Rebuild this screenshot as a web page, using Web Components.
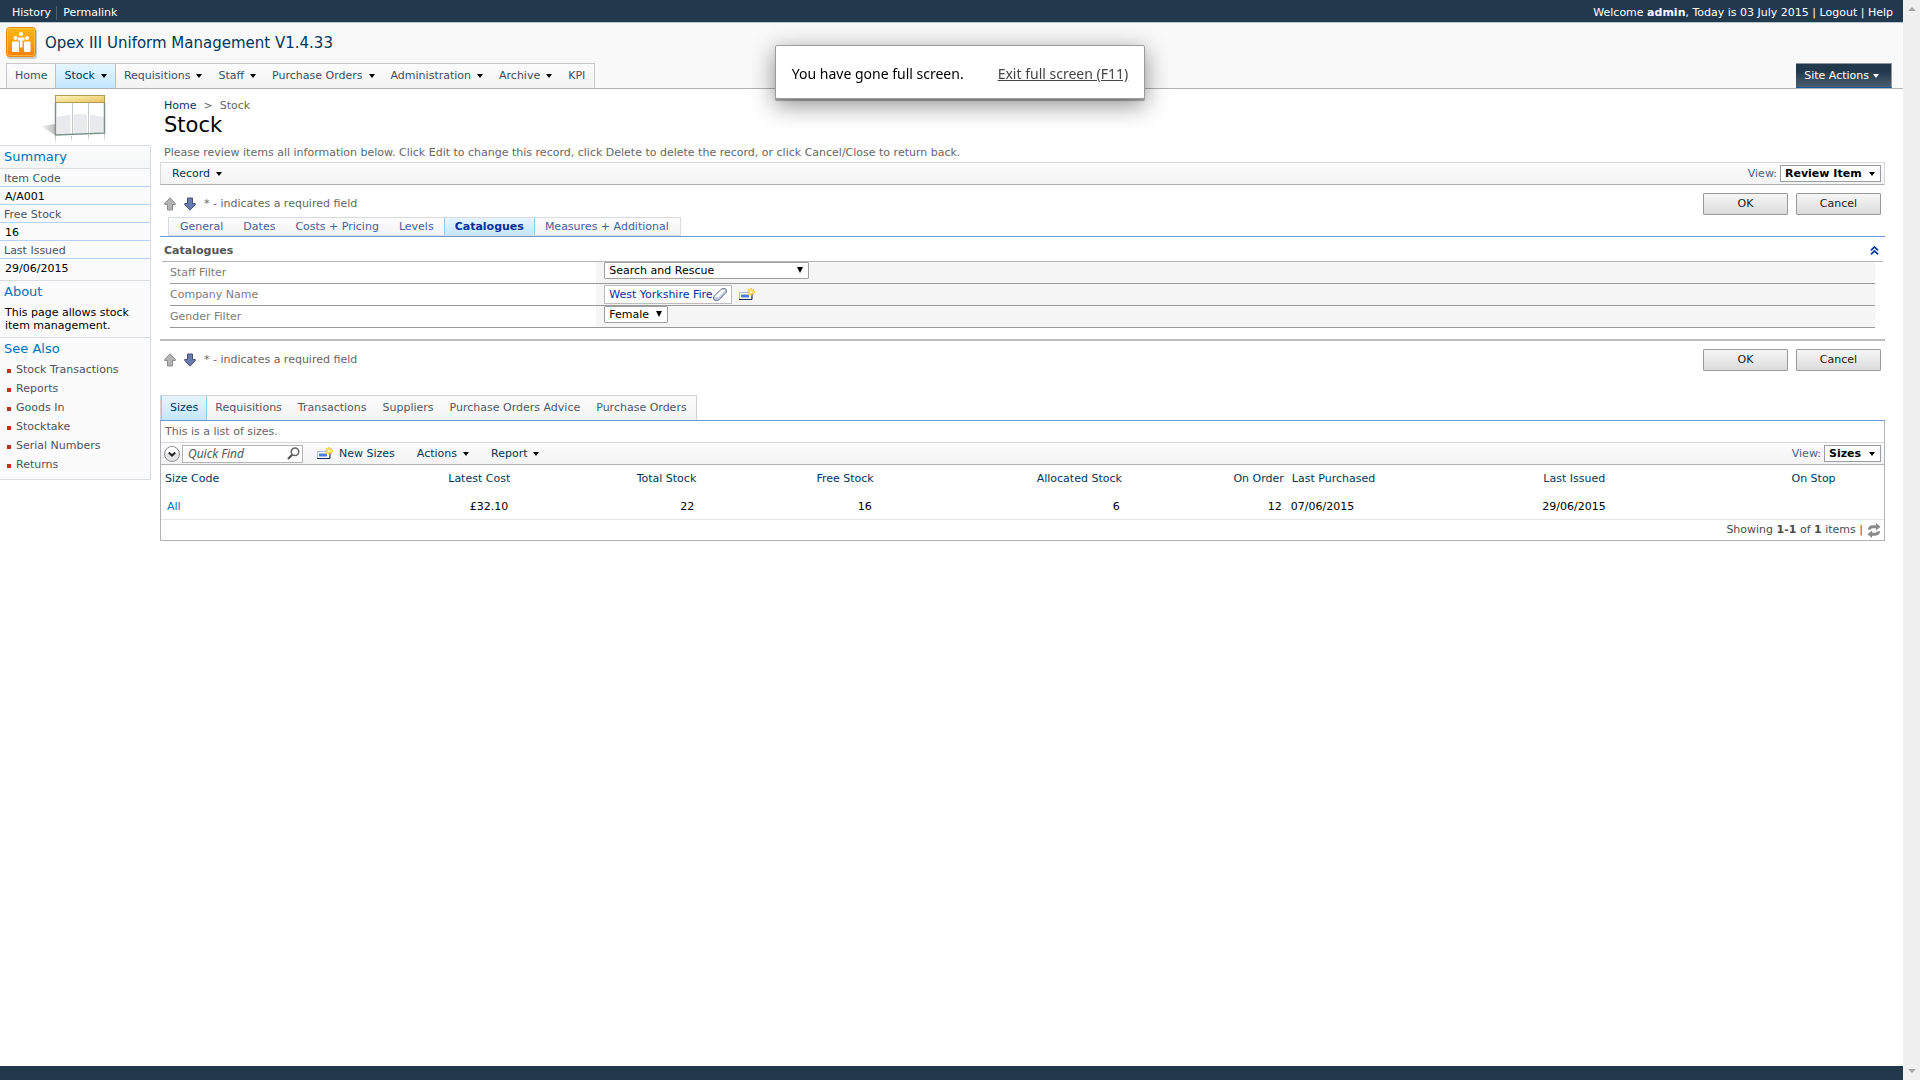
<!DOCTYPE html>
<html lang="en">
<head>
<meta charset="utf-8">
<title>Opex III Uniform Management</title>
<style>
  html, body {
    margin: 0;
    block-size: 100%;
  }

  body {
    background: #fff;
    color: #000;
    font: 11px/14px "DejaVu Sans", Verdana, sans-serif;
  }
</style>
</head>
<body>
<ox-app>
  <ox-topbar slot="top"></ox-topbar>
  <ox-header slot="top">Opex III Uniform Management V1.4.33</ox-header>
  <ox-sidebar slot="side"></ox-sidebar>

  <ox-page-title></ox-page-title>
  <ox-record-bar></ox-record-bar>
  <ox-form-actions></ox-form-actions>
  <ox-form-tabs></ox-form-tabs>
  <ox-catalogues></ox-catalogues>
  <ox-form-actions></ox-form-actions>
  <ox-child-tabs></ox-child-tabs>
  <ox-size-list></ox-size-list>
</ox-app>
<ox-toast>You have gone full screen.</ox-toast>

<script>
const icons = {
  logo: `
    <svg width="32" height="32" viewBox="0 0 32 32" aria-hidden="true">
      <defs>
        <linearGradient id="lg" x1="0" y1="0" x2="0" y2="1">
          <stop offset="0" stop-color="#fbb616"/>
          <stop offset=".5" stop-color="#fda011"/>
          <stop offset="1" stop-color="#f87d0c"/>
        </linearGradient>
      </defs>
      <rect x="1" y="2" width="30" height="30" rx="3" fill="#000" opacity=".18"/>
      <rect x=".5" y=".5" width="29" height="29" rx="3" fill="url(#lg)" stroke="#e8890f"/>
      <rect x="1.5" y="1.5" width="27" height="27" rx="2" fill="none" stroke="#ffd25e" opacity=".6"/>
      <g fill="#fff">
        <circle cx="15" cy="7" r="2"/>
        <circle cx="9.5" cy="11" r="2"/>
        <circle cx="21" cy="11" r="2"/>
        <path d="M12 10.5h6.500v3h-2v7h-2.500v-7H12z"/>
        <rect x="6" y="14.5" width="7" height="10.5" rx="1"/>
        <rect x="18" y="14.5" width="6.5" height="10.5" rx="1"/>
      </g>
    </svg>`,
  list: `
    <svg width="68" height="50" viewBox="0 0 68 50" aria-hidden="true">
      <defs>
        <linearGradient id="hd" x1="0" y1="0" x2="1" y2="1">
          <stop offset="0" stop-color="#fdf6c4"/>
          <stop offset="1" stop-color="#e9c25a"/>
        </linearGradient>
        <linearGradient id="sh" x1="0" y1="0" x2="1" y2="0">
          <stop offset="0" stop-color="#fff"/>
          <stop offset="1" stop-color="#bbb"/>
        </linearGradient>
        <linearGradient id="rf" x1="0" y1="0" x2="0" y2="1">
          <stop offset="0" stop-color="#bbb"/>
          <stop offset="1" stop-color="#fff"/>
        </linearGradient>
      </defs>
      <path d="M0 31l15-2v11z" fill="url(#sh)"/>
      <rect x="15" y="41" width="1" height="8" fill="url(#rf)"/>
      <rect x="31" y="41" width="1" height="6" fill="url(#rf)"/>
      <rect x="48" y="40" width="1" height="6" fill="url(#rf)"/>
      <rect x="64" y="39" width="1" height="8" fill="url(#rf)"/>
      <path d="M15.5 .5h49V38L15.500 40z" fill="#fff"/>
      <path d="M17 22q24-6 47 0v15L17 39z" fill="#e9eaed"/>
      <path d="M32 8v31M48.500 8v30" stroke="#fff" stroke-width="3"/>
      <path d="M32.500 8v31M48.500 8v30" stroke="#c4cbc7"/>
      <path d="M15.500 7v33L64.500 38V7" fill="none" stroke="#7c9488" stroke-width="1.5"/>
      <rect x="15.5" y=".5" width="49" height="7" fill="url(#hd)" stroke="#b29c5c"/>
    </svg>`,
  up: `
    <svg width="12" height="14" viewBox="0 0 12 14" aria-hidden="true">
      <path d="M6 .8l5.300 5.700v1H8.500v5.500h-5V7.500H.7v-1z" fill="#b4b4b4" stroke="#8b8b8b"/>
    </svg>`,
  down: `
    <svg width="12" height="14" viewBox="0 0 12 14" aria-hidden="true">
      <path d="M6 13.200L.7 7.500v-1h2.800V1h5v5.500h2.800v1z" fill="#6a7bb0" stroke="#45507c"/>
    </svg>`,
  item: `
    <svg width="16" height="13" viewBox="0 0 16 13" aria-hidden="true">
      <rect x=".5" y="4.5" width="12" height="7" fill="#fff" stroke="#a9bbe3"/>
      <path d="M0 11.500h13V6" fill="none" stroke="#15285c"/>
      <rect x="2" y="6.5" width="8" height="3" fill="#4d7de0"/>
      <g stroke="#eec42c" stroke-width="1.3">
        <path d="M12 0v8M8 4h8M9.200 1.200l5.600 5.600M14.800 1.200L9.200 6.800"/>
      </g>
      <circle cx="12" cy="4" r="1.8" fill="#fff6a8"/>
    </svg>`,
  eraser: `
    <svg width="14" height="13" viewBox="0 0 14 13" aria-hidden="true">
      <path d="M8 1.500Q9 .6 10.200.6h1.600Q13.400.8 13.300 2.500v1.700L6.500 11.500Q5.500 12.500 3.500 12.300H2Q.5 12 .6 10V8.700z" fill="#c6d0e0" stroke="#5c6b86"/>
      <path d="M1.500 8.800L8.500 1.700h4L5.500 9z" fill="#fff"/>
    </svg>`,
  collapse: `
    <svg width="9" height="9" viewBox="0 0 9 9" aria-hidden="true">
      <path d="M1 4.300L4.500 1 8 4.300M1 8.300L4.500 5 8 8.300" fill="none" stroke="#003399" stroke-width="1.7"/>
    </svg>`,
  expand: `
    <svg width="16" height="16" viewBox="0 0 16 16" aria-hidden="true">
      <circle cx="8" cy="8" r="7.5" fill="#e4e4e4" stroke="#8d8d8d"/>
      <path d="M2 7a6 6 0 0 1 12 0z" fill="#fff"/>
      <path d="M4.800 6.500L8 9.700l3.200-3.200" fill="none" stroke="#222" stroke-width="2"/>
    </svg>`,
  search: `
    <svg width="13" height="13" viewBox="0 0 13 13" aria-hidden="true">
      <circle cx="8" cy="4.8" r="3.8" fill="none" stroke="#666" stroke-width="1.5"/>
      <path d="M5.200 7.800L1 12" stroke="#555" stroke-width="2.2"/>
    </svg>`,
  refresh: `
    <svg width="14" height="15" viewBox="0 0 14 15" fill="#8a8a8a" aria-hidden="true">
      <path d="M1 7Q1 2.500 6 2.300h3V0l4.500 3.800L9 7.500V5.200H6.500Q4 5.200 3.700 6.500z"/>
      <path d="M13 8q0 4.500-5 4.700H5V15L.5 11.200 5 7.500v2.300h2.500q2.500 0 2.800-1.300z"/>
    </svg>`,
};

class OxElement extends HTMLElement {
  constructor() {
    super();

    this.attachShadow({ mode: 'open' });
  }

  get styles() {
    return '';
  }

  get template() {
    return '<slot></slot>';
  }

  connectedCallback() {
    this.shadowRoot.innerHTML = `
      <style>
        *, :host {
          box-sizing: border-box;
        }

        :host {
          display: block;
        }

        a {
          color: inherit;
          text-decoration: none;
        }

        button, input, select {
          font: inherit;
          color: inherit;
          margin: 0;
        }

        ul {
          list-style: none;
          margin: 0;
          padding: 0;
        }

        svg {
          display: block;
          flex: none;
        }

        .icon-btn {
          display: block;
          border: 0;
          padding: 0;
          background: none;
          cursor: pointer;
        }

        .caret {
          display: inline-block;
          flex: none;
          border: 3px solid transparent;
          border-block-start: 4px solid currentColor;
          border-block-end: 0;
        }

        ${this.styles}
      </style>
      ${this.template}
    `;
  }
}

customElements.define('ox-app', class extends OxElement {
  get styles() {
    return `
      :host {
        display: flex;
        min-block-size: 100vh;
      }

      .page {
        flex: 1;
        min-inline-size: 0;
        display: flex;
        flex-direction: column;
      }

      .columns {
        flex: 1;
        display: flex;
        align-items: flex-start;
        gap: 9px;
        padding-inline-end: 18px;
      }

      aside {
        flex: none;
        inline-size: 151px;
      }

      main {
        flex: 1;
        min-inline-size: 0;
      }

      footer {
        block-size: 14px;
        background: #22384d;
      }

      .scrollbar {
        flex: none;
        inline-size: 17px;
        padding: 7px 5px;
        background: #f0f0f0;
        color: #a3a3a3;
        display: flex;
        flex-direction: column;
        justify-content: space-between;
        align-items: center;
      }

      .scrollbar .caret {
        border-inline-width: 4px;
      }

      .scrollbar .caret:first-child {
        transform: rotate(180deg);
      }
    `;
  }

  get template() {
    return `
      <div class="page">
        <slot name="top"></slot>
        <div class="columns">
          <aside><slot name="side"></slot></aside>
          <main><slot></slot></main>
        </div>
        <footer></footer>
      </div>
      <div class="scrollbar" aria-hidden="true">
        <span class="caret"></span>
        <span class="caret"></span>
      </div>
    `;
  }
});

customElements.define('ox-topbar', class extends OxElement {
  get styles() {
    return `
      :host {
        display: flex;
        justify-content: space-between;
        align-items: center;
        block-size: 23px;
        padding: 3px 10px 0 12px;
        background: #22384d;
        border-block-end: 1px solid #bcc7d1;
        color: #fff;
      }

      nav {
        display: flex;
        gap: 5px;
      }

      nav a + a {
        border-inline-start: 1px solid #50606f;
        padding-inline-start: 6px;
      }
    `;
  }

  get template() {
    return `
      <nav><a href="#history">History</a><a href="#permalink">Permalink</a></nav>
      <div>Welcome <b>admin</b>, Today is 03 July 2015 | <a href="#logout">Logout</a> | <a href="#help">Help</a></div>
    `;
  }
});

customElements.define('ox-header', class extends OxElement {
  #items = [
    ['Home'], ['Stock', true], ['Requisitions', true], ['Staff', true],
    ['Purchase Orders', true], ['Administration', true], ['Archive', true], ['KPI'],
  ];

  get styles() {
    return `
      :host {
        background: #f9f9f9;
        border-block-end: 1px solid #b0b2b5;
        padding: 4px 11px 0 6px;
        color: #003759;
      }

      .brand {
        display: flex;
        align-items: center;
        gap: 7px;
        block-size: 32px;
        margin-block-end: 4px;
        font-size: 15px;
        line-height: 20px;
      }

      .row {
        display: flex;
        justify-content: space-between;
      }

      ul {
        display: flex;
        padding-inline-end: 1px;
        border: 1px solid #c8c8c8;
        border-block-end: 0;
        background: linear-gradient(#fcfcfc, #f3f3f3);
        color: #3b4f65;
      }

      li a {
        display: flex;
        align-items: center;
        gap: 6px;
        block-size: 24px;
        padding-inline: 8px;
      }

      .caret {
        color: #000;
      }

      .active {
        background: linear-gradient(#e6f5ff, #c3e7ff);
        border-inline: 1px solid #91cdf2;
        color: #003759;
      }

      .site {
        display: flex;
        align-items: center;
        gap: 4px;
        block-size: 25px;
        padding: 0 12px 0 8px;
        border: 1px solid #8d98a3;
        border-inline-start: 0;
        border-block-end: 1px solid #0b5a9c;
        background: linear-gradient(#22384d 30%, #4b5d6e);
        color: #fff;
      }

      .site .caret {
        color: #fff;
      }
    `;
  }

  get template() {
    return `
      <div class="brand">${icons.logo}<span><slot></slot></span></div>
      <div class="row">
        <ul>
          ${this.#items.map(([name, menu]) => `
            <li><a href="#${name}" ${name === 'Stock' ? 'class="active"' : ''}>${name}${menu ? '<span class="caret"></span>' : ''}</a></li>
          `).join('')}
        </ul>
        <button class="site" type="button">Site Actions<span class="caret"></span></button>
      </div>
    `;
  }
});

customElements.define('ox-sidebar', class extends OxElement {
  #summary = [['Item Code', 'A/A001'], ['Free Stock', '16'], ['Last Issued', '29/06/2015']];
  #links = ['Stock Transactions', 'Reports', 'Goods In', 'Stocktake', 'Serial Numbers', 'Returns'];

  get styles() {
    return `
      .picture {
        display: flex;
        block-size: 56px;
        padding: 6px 0 0 40px;
      }

      .box {
        border: 1px solid #d8dbe0;
        border-inline-start: 0;
        background: #fbfbfb;
      }

      h2 {
        margin: 0;
        padding: 3px 4px;
        font-size: 13px;
        font-weight: normal;
        line-height: 16px;
        color: #0072bc;
      }

      .box > h2:first-child {
        border-block-end: 1px solid #d8dbe0;
        background: linear-gradient(#fcfcfc, #f5f6f7);
      }

      dl {
        margin: 0;
        padding-block-end: 4px;
        border-block-end: 1px solid #d8dbe0;
      }

      dt, dd {
        margin: 0;
        padding: 3px 4px 0;
        border-block-end: 1px solid #b5d3fa;
      }

      dt {
        color: #4c535c;
      }

      dd {
        padding-inline-start: 5px;
      }

      dd:last-child {
        border: 0;
      }

      p {
        margin: 0;
        padding: 3px 5px 5px;
        line-height: 13px;
        border-block-end: 1px solid #d8dbe0;
      }

      ul {
        padding: 0 7px 5px;
        line-height: 19px;
        color: #4c535c;
      }

      li {
        display: flex;
        align-items: center;
        gap: 5px;
      }

      li::before {
        content: "";
        inline-size: 4px;
        block-size: 4px;
        margin-block-start: 2px;
        background: #c0311a;
      }
    `;
  }

  get template() {
    return `
      <div class="picture">${icons.list}</div>
      <div class="box">
        <h2>Summary</h2>
        <dl>${this.#summary.map(([k, v]) => `<dt>${k}</dt><dd>${v}</dd>`).join('')}</dl>
        <h2>About</h2>
        <p>This page allows stock item management.</p>
        <h2>See Also</h2>
        <ul>${this.#links.map((l) => `<li><a href="#${l}">${l}</a></li>`).join('')}</ul>
      </div>
    `;
  }
});

customElements.define('ox-page-title', class extends OxElement {
  get styles() {
    return `
      :host {
        padding: 10px 4px 2px;
        color: #666;
      }

      nav a {
        color: #003759;
      }

      h1 {
        margin: 0 0 9px;
        font-size: 21px;
        font-weight: normal;
        line-height: 24px;
        color: #000;
      }

      p {
        margin: 0;
      }
    `;
  }

  get template() {
    return `
      <nav><a href="#home">Home</a>&nbsp; &gt; &nbsp;Stock</nav>
      <h1>Stock</h1>
      <p>Please review items all information below. Click Edit to change this record, click Delete to delete the record, or click Cancel/Close to return back.</p>
    `;
  }
});

// <ox-view-picker value="Sizes">: the bold "View:" drop-down in a toolbar
customElements.define('ox-view-picker', class extends OxElement {
  get styles() {
    return `
      :host {
        display: flex;
        align-items: center;
        gap: 3px;
        color: #47618c;
      }

      .select {
        position: relative;
      }

      select {
        appearance: none;
        block-size: 17px;
        padding: 0 18px 0 4px;
        border: 1px solid #9a9da1;
        border-radius: 0;
        background: #fff;
        color: #000;
        font-weight: bold;
      }

      .caret {
        position: absolute;
        inset-block-start: 7px;
        inset-inline-end: 6px;
        color: #000;
        pointer-events: none;
      }
    `;
  }

  get template() {
    return `
      <label for="view">View:</label>
      <span class="select">
        <select id="view"><option>${this.getAttribute('value')}</option></select>
        <span class="caret"></span>
      </span>
    `;
  }
});

customElements.define('ox-record-bar', class extends OxElement {
  get styles() {
    return `
      :host {
        display: flex;
        justify-content: space-between;
        align-items: center;
        block-size: 23px;
        padding: 0 3px 0 11px;
        border: 1px solid #d8d8d8;
        border-block-end-color: #b0b0b0;
        background: linear-gradient(#fcfcfc, #f3f3f3);
      }

      .icon-btn {
        display: flex;
        align-items: center;
        gap: 6px;
        color: #003759;
      }

      .caret {
        color: #000;
      }
    `;
  }

  get template() {
    return `
      <button class="icon-btn" type="button">Record<span class="caret"></span></button>
      <ox-view-picker value="Review Item"></ox-view-picker>
    `;
  }
});

customElements.define('ox-form-actions', class extends OxElement {
  get styles() {
    return `
      :host {
        display: flex;
        align-items: center;
        gap: 8px;
        padding: 8px 4px 2px;
        color: #666;
      }

      .note {
        flex: 1;
      }

      .action {
        inline-size: 85px;
        block-size: 22px;
        padding: 0;
        border: 1px solid #999;
        border-radius: 1px;
        background: linear-gradient(#f6f6f6, #dcdcdc);
        color: #222;
      }
    `;
  }

  get template() {
    return `
      <button class="icon-btn" type="button" title="Previous">${icons.up}</button>
      <button class="icon-btn" type="button" title="Next">${icons.down}</button>
      <span class="note">* - indicates a required field</span>
      <button class="action" type="button">OK</button>
      <button class="action" type="button">Cancel</button>
    `;
  }
});

customElements.define('ox-form-tabs', class extends OxElement {
  #tabs = ['General', 'Dates', 'Costs + Pricing', 'Levels', 'Catalogues', 'Measures + Additional'];

  get styles() {
    return `
      :host {
        display: flex;
        padding-inline-start: 8px;
        border-block-end: 1px solid #6e9ad4;
      }

      ul {
        display: flex;
        padding-inline: 1px;
        border: 1px solid #d8dbe0;
        background: linear-gradient(#fcfcfc, #f3f3f3);
        color: #47619b;
      }

      a {
        display: block;
        padding: 2px 10px 1px;
      }

      .active {
        border-inline: 1px solid #91cdf2;
        background: linear-gradient(#e6f5ff, #c3e7ff);
        color: #003399;
        font-weight: bold;
      }
    `;
  }

  get template() {
    return `
      <ul>${this.#tabs.map((t) => `<li><a href="#${t}" ${t === 'Catalogues' ? 'class="active"' : ''}>${t}</a></li>`).join('')}</ul>
    `;
  }
});

customElements.define('ox-catalogues', class extends OxElement {
  get styles() {
    return `
      :host {
        padding: 0 2px 11px;
        border-block-end: 2px solid #bdbdbd;
      }

      header {
        display: flex;
        justify-content: space-between;
        align-items: center;
        block-size: 25px;
        padding: 3px 4px 0 2px;
        border-block-end: 1px solid #b5b5b5;
      }

      h3 {
        margin: 0;
        font-size: 11px;
        color: #555;
      }

      .rows {
        padding-inline: 8px;
      }

      .row {
        display: flex;
        block-size: 22px;
        border-block-end: 1px solid #999;
      }

      label, .label {
        flex: none;
        inline-size: 25%;
        padding-block-start: 4px;
        color: #7c7c7c;
      }

      .value {
        flex: 1;
        display: flex;
        align-items: center;
        gap: 7px;
        padding-inline-start: 8px;
        background: #f5f5f5;
      }

      .select {
        position: relative;
        align-self: flex-start;
      }

      select {
        appearance: none;
        display: block;
        block-size: 17px;
        padding: 0 18px 0 4px;
        border: 1px solid #a0a0a0;
        border-radius: 1px;
        background: #fff;
        color: #000;
      }

      .wide select {
        inline-size: 205px;
      }

      .select .caret {
        position: absolute;
        inset-block-start: 5px;
        inset-inline-end: 6px;
        border-block-start-width: 6px;
        pointer-events: none;
      }

      .lookup {
        display: flex;
        align-items: center;
        block-size: 19px;
        padding-inline: 4px;
        border: 1px solid #bcbcbc;
        background: #fff;
        color: #003399;
      }
    `;
  }

  get template() {
    return `
      <header>
        <h3>Catalogues</h3>
        <button class="icon-btn" type="button" title="Collapse">${icons.collapse}</button>
      </header>
      <div class="rows">
        <div class="row">
          <label for="staff">Staff Filter</label>
          <div class="value">
            <span class="select wide"><select id="staff"><option>Search and Rescue</option></select><span class="caret"></span></span>
          </div>
        </div>
        <div class="row">
          <span class="label">Company Name</span>
          <div class="value">
            <span class="lookup">
              <a href="#company">West Yorkshire Fire</a>
              <button class="icon-btn" type="button" title="Clear">${icons.eraser}</button>
            </span>
            <button class="icon-btn" type="button" title="New Company">${icons.item}</button>
          </div>
        </div>
        <div class="row">
          <label for="gender">Gender Filter</label>
          <div class="value">
            <span class="select"><select id="gender"><option>Female</option></select><span class="caret"></span></span>
          </div>
        </div>
      </div>
    `;
  }
});

customElements.define('ox-child-tabs', class extends OxElement {
  #tabs = ['Sizes', 'Requisitions', 'Transactions', 'Suppliers', 'Purchase Orders Advice', 'Purchase Orders'];

  get styles() {
    return `
      :host {
        display: flex;
        margin-block-start: 22px;
        border-block-end: 1px solid #6e9ad4;
      }

      ul {
        display: flex;
        padding-inline-end: 1px;
        border: 1px solid #d0d2d5;
        border-block-end: 0;
        background: linear-gradient(#fcfcfc, #f3f3f3);
        color: #4c5a6b;
      }

      a {
        display: block;
        padding: 5px 8px;
      }

      .active {
        border-inline: 1px solid #91cdf2;
        background: linear-gradient(#e6f5ff, #c3e7ff);
        color: #003759;
      }
    `;
  }

  get template() {
    return `
      <ul>${this.#tabs.map((t) => `<li><a href="#${t}" ${t === 'Sizes' ? 'class="active"' : ''}>${t}</a></li>`).join('')}</ul>
    `;
  }
});

customElements.define('ox-size-list', class extends OxElement {
  // name, value, column width, right-aligned
  #columns = [
    ['Size Code', '<a href="#all">All</a>', '10%'],
    ['Latest Cost', '£32.10', '10.5%', true],
    ['Total Stock', '22', '10.8%', true],
    ['Free Stock', '16', '10.3%', true],
    ['Allocated Stock', '6', '14.4%', true],
    ['On Order', '12', '9.4%', true],
    ['Last Purchased', '07/06/2015', '14.6%'],
    ['Last Issued', '29/06/2015', '14.4%'],
    ['On Stop', '', '5.6%'],
  ];

  get styles() {
    return `
      :host {
        border: 1px solid #b0b2b8;
        border-block-start: 0;
      }

      p {
        margin: 0;
        padding: 4px 4px 3px;
        color: #666;
      }

      .toolbar {
        display: flex;
        align-items: center;
        block-size: 23px;
        padding-inline: 3px;
        border-block: 1px solid #d8d8d8;
        border-block-end-color: #b0b2b8;
        background: linear-gradient(#fcfcfc, #f3f3f3);
        color: #003759;
      }

      .find {
        display: flex;
        align-items: center;
        inline-size: 121px;
        block-size: 18px;
        margin-inline: 2px 14px;
        padding-inline: 5px 2px;
        border: 1px solid #b5b5b5;
        background: #fff;
      }

      input {
        flex: 1;
        min-inline-size: 0;
        padding: 0;
        border: 0;
        background: none;
        font: italic 12px/16px "Noto Sans", "Segoe UI", sans-serif;
      }

      input::placeholder {
        color: #555;
      }

      .menu {
        display: flex;
        align-items: center;
        gap: 6px;
        margin-inline-end: 22px;
      }

      .caret {
        color: #000;
      }

      ox-view-picker {
        margin-inline-start: auto;
      }

      table {
        inline-size: 100%;
        table-layout: fixed;
        border-collapse: collapse;
      }

      th {
        padding: 7px 4px 5px;
        font-weight: normal;
        text-align: start;
        color: #003759;
      }

      td {
        padding: 9px 6px 5px;
      }

      td.date {
        padding-inline-start: 3px;
      }

      td a {
        color: #0072bc;
      }

      .end {
        text-align: end;
      }

      .pager {
        display: flex;
        justify-content: flex-end;
        align-items: center;
        gap: 4px;
        block-size: 21px;
        padding-inline-end: 3px;
        border-block-start: 1px solid #e6e6e6;
        color: #4c4c4c;
      }
    `;
  }

  get template() {
    return `
      <p>This is a list of sizes.</p>
      <div class="toolbar">
        <button class="icon-btn" type="button" title="Advanced search">${icons.expand}</button>
        <span class="find">
          <input type="text" placeholder="Quick Find" aria-label="Quick Find">
          <button class="icon-btn" type="button" title="Find">${icons.search}</button>
        </span>
        <button class="icon-btn menu" type="button">${icons.item}New Sizes</button>
        <button class="icon-btn menu" type="button">Actions<span class="caret"></span></button>
        <button class="icon-btn menu" type="button">Report<span class="caret"></span></button>
        <ox-view-picker value="Sizes"></ox-view-picker>
      </div>
      <table>
        <colgroup>${this.#columns.map((c) => `<col style="width: ${c[2]}">`).join('')}</colgroup>
        <thead>
          <tr>${this.#columns.map(([name, , , end]) => `<th class="${end ? 'end' : ''}">${name}</th>`).join('')}</tr>
        </thead>
        <tbody>
          <tr>${this.#columns.map(([name, value, , end]) => `<td class="${end ? 'end' : ''}${name.startsWith('Last ') ? ' date' : ''}">${value}</td>`).join('')}</tr>
        </tbody>
      </table>
      <div class="pager">
        <span>Showing <b>1-1</b> of <b>1</b> items |</span>
        <button class="icon-btn" type="button" title="Refresh">${icons.refresh}</button>
      </div>
    `;
  }
});

// browser notice that floats over the page
customElements.define('ox-toast', class extends OxElement {
  get styles() {
    return `
      :host {
        position: fixed;
        inset-block-start: 45px;
        inset-inline: 0;
        inline-size: fit-content;
        margin-inline: auto;
        display: flex;
        gap: 34px;
        padding: 18px 16px 15px;
        border: 1px solid #9c9c9c;
        border-radius: 2px;
        background: #fff;
        box-shadow: 0 2px 1px rgb(0 0 0 / 30%), 0 6px 24px rgb(0 0 0 / 45%);
        font: 14px/19px "Noto Sans", "Segoe UI", sans-serif;
      }

      a {
        color: #444;
        text-decoration: underline;
      }
    `;
  }

  get template() {
    return '<slot></slot><a href="#exit">Exit full screen (F11)</a>';
  }
});
</script>
</body>
</html>
